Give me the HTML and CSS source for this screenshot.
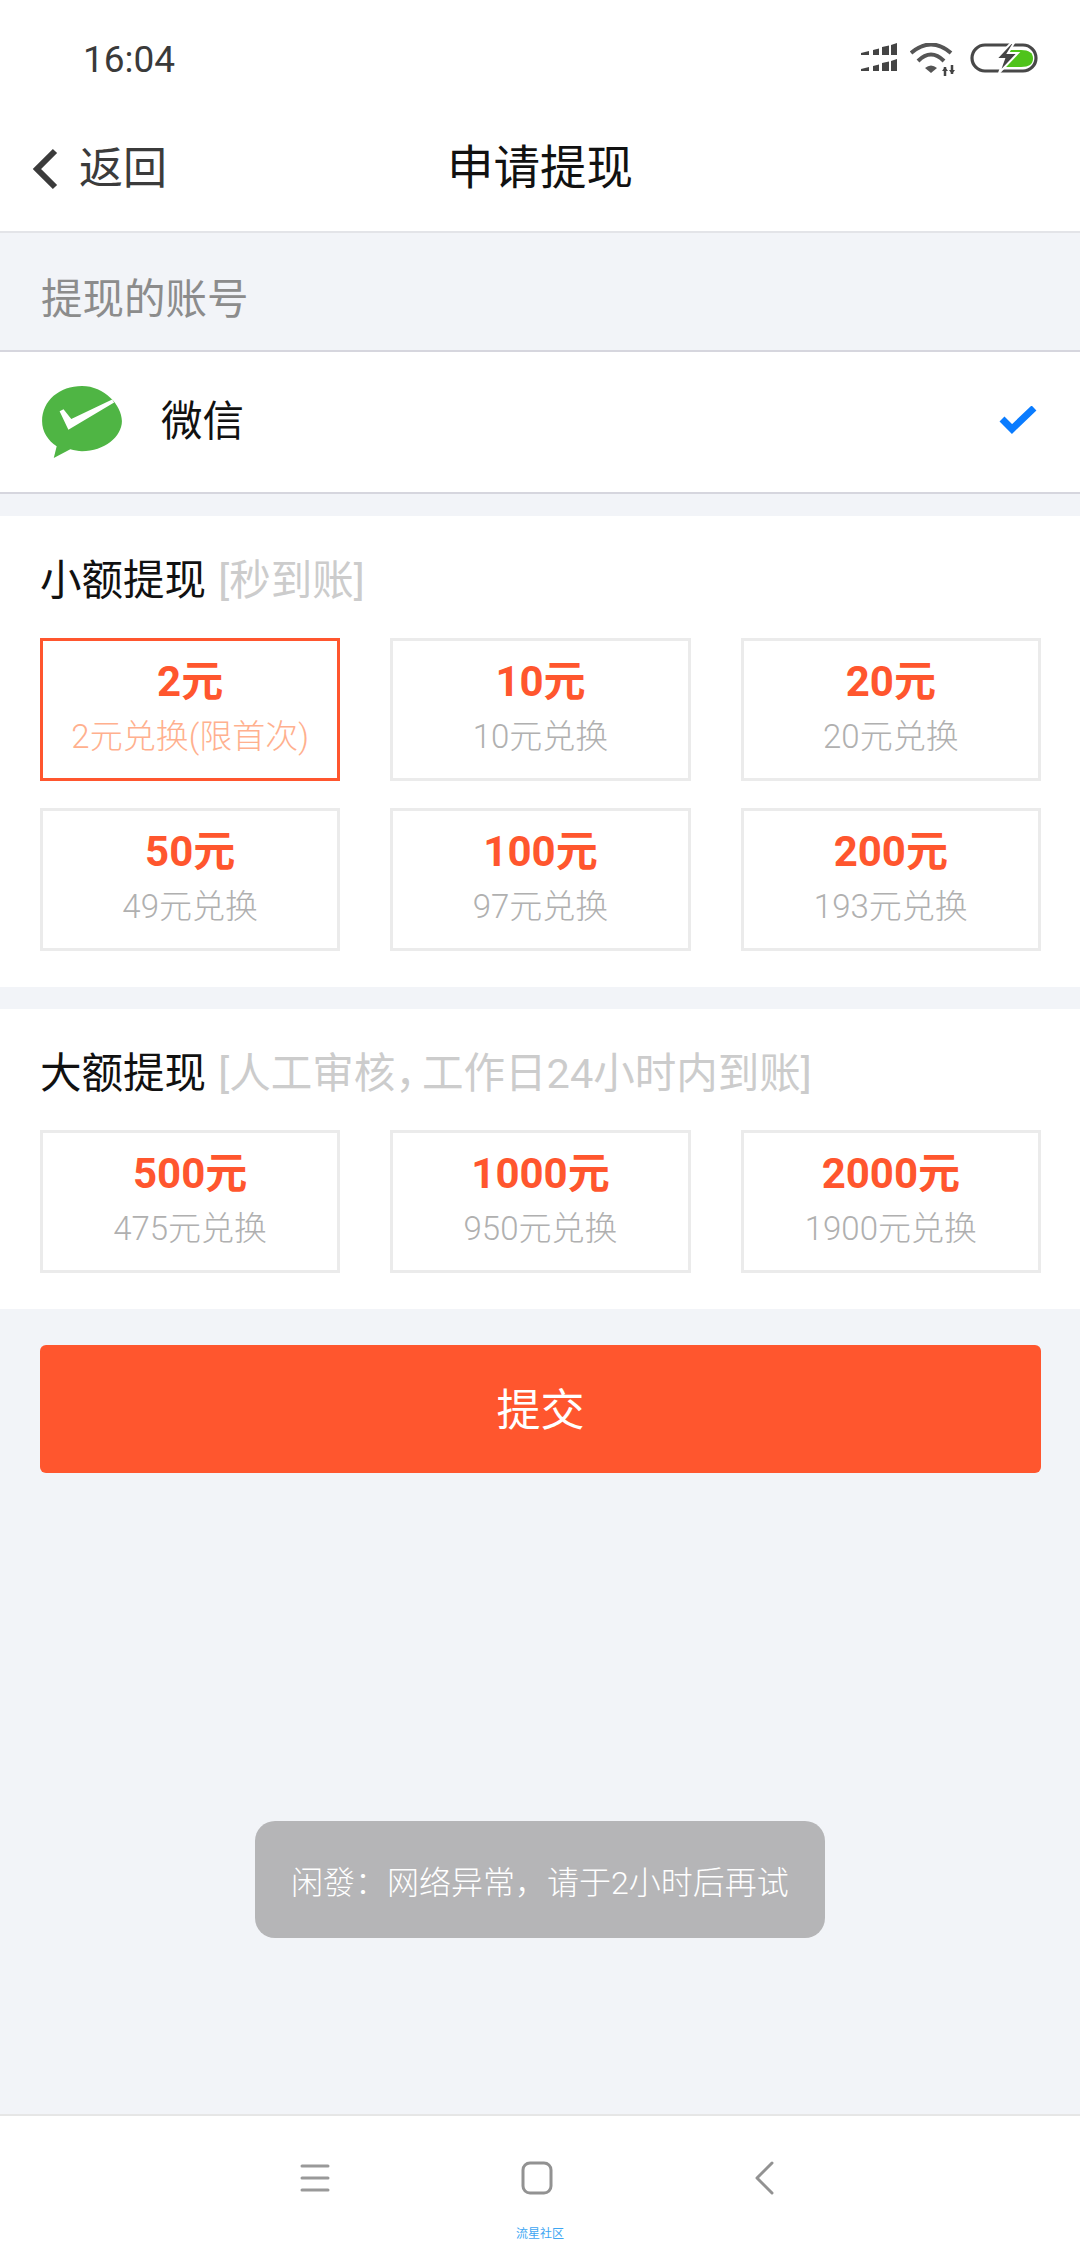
FILE: index.html
```html
<!DOCTYPE html>
<html lang="zh-CN">
<head>
<meta charset="utf-8">
<title>申请提现</title>
<link rel="stylesheet" href="styles.css">
</head>
<body>
<div class="app">
  <header class="top">
    <div class="status">
      <span class="time">16:04</span>
      <div class="status-icons">
        <svg width="36" height="28" viewBox="0 0 36 28"><g fill="#444"><path d="M0 10 8 8V12H0zM12 7 18 5.500V12H12zM21 4 28 2.500V12H21zM30 2 36 0V12H30z"/><path d="M0 26 8 24V28H0zM12 23 18 21.500V28H12zM21 20 28 18.500V28H21zM30 18 36 16V28H30z"/></g></svg>
        <svg width="47" height="33" viewBox="0 0 47 33"><g fill="none" stroke="#555" stroke-width="4"><path d="M1 10Q21-7 41 10"/><path d="M8 18Q21 5 34 18"/></g><path d="M15 25Q21 20 27 25L21 30z" fill="#555"/><path d="M35 24V33M42 22V31" stroke="#444" stroke-width="2.500"/><path d="M32 28H38L35 24zM39 27H45L42 31z" fill="#444"/></svg>
        <svg width="68" height="30" viewBox="0 0 68 30"><rect x="2" y="2" width="64" height="26" rx="13" fill="none" stroke="#484848" stroke-width="3.200"/><path d="M38 7H51Q63 7 63 15.500T51 24H32z" fill="#4fc31a"/><path d="M41 0 26 16H34L29 30 48 10H38L44 0z" fill="#444" stroke="#fff" stroke-width="2"/></svg>
      </div>
    </div>
    <nav class="nav">
      <div class="back">
        <svg width="28" height="44" viewBox="0 0 28 44"><path d="M25 4 7 22 25 40" fill="none" stroke="#3b3b3b" stroke-width="6"/></svg>
        <span>返回</span>
      </div>
      <h1 class="title">申请提现</h1>
    </nav>
  </header>

  <div class="section-label">提现的账号</div>
  <div class="account">
    <svg class="wechat" width="82" height="74" viewBox="0 0 84 76"><path d="M42 1C19 1 1 16 1 37c0 11 6 20 15 26l-3 12 17-9c4 1 8 2 12 2 23 0 41-15 41-31S65 1 42 1z" fill="#4fb544"/><path d="M19 27 28 46 75 18 73 15 31 35 23 25z" fill="#fff"/></svg>
    <span class="account-name">微信</span>
    <svg class="tick" width="38" height="30" viewBox="0 0 38 30"><path d="M3 13 13 23 35 2" fill="none" stroke="#0a7cff" stroke-width="7"/></svg>
  </div>

  <section class="card">
    <h2 class="card-title">小额提现 <em>[秒到账]</em></h2>
    <div class="grid">
      <div class="opt active"><b>2元</b><span>2元兑换(限首次)</span></div>
      <div class="opt"><b>10元</b><span>10元兑换</span></div>
      <div class="opt"><b>20元</b><span>20元兑换</span></div>
      <div class="opt"><b>50元</b><span>49元兑换</span></div>
      <div class="opt"><b>100元</b><span>97元兑换</span></div>
      <div class="opt"><b>200元</b><span>193元兑换</span></div>
    </div>
  </section>

  <section class="card">
    <h2 class="card-title">大额提现 <em>[人工审核<i class="comma">，</i>工作日24小时内到账]</em></h2>
    <div class="grid">
      <div class="opt"><b>500元</b><span>475元兑换</span></div>
      <div class="opt"><b>1000元</b><span>950元兑换</span></div>
      <div class="opt"><b>2000元</b><span>1900元兑换</span></div>
    </div>
  </section>

  <div class="submit-wrap"><button class="submit">提交</button></div>

  <div class="toast">闲發：网络异常，请于2小时后再试</div>

  <footer class="bottom">
    <div class="softkeys">
      <svg width="30" height="30" viewBox="0 0 30 30"><path d="M2 3H28M2 15H28M2 27H28" stroke="#999" stroke-width="3" stroke-linecap="round"/></svg>
      <svg class="home" width="32" height="34" viewBox="0 0 32 34"><rect x="2" y="2" width="28" height="30" rx="7" fill="none" stroke="#929292" stroke-width="3"/></svg>
      <svg width="20" height="34" viewBox="0 0 20 34"><path d="M17 2 2 17 17 32" fill="none" stroke="#929292" stroke-width="3" stroke-linecap="round" stroke-linejoin="round"/></svg>
    </div>
    <div class="mark">流星社区</div>
  </footer>
</div>
</body>
</html>
```
FILE: styles.css
```css
* { box-sizing: border-box; }
html, body { margin: 0; padding: 0; }
body { font-family: Roboto, "Noto Sans CJK SC", sans-serif; background: #f2f4f8; }
.app { position: relative; width: 1080px; height: 2244px; display: flex; flex-direction: column; overflow: hidden; background: #f2f4f8; }

.top { height: 233px; background: #fff; border-bottom: 2px solid #e3e4e8; flex: none; }
.status { height: 143px; padding: 40px 42px 0 83px; display: flex; justify-content: space-between; align-items: flex-start; }
.time { font-size: 37px; line-height: 40px; color: #3a3a3a; }
.status-icons { display: flex; align-items: flex-start; gap: 13px; height: 40px; padding-top: 3px; }
.nav { position: relative; height: 88px; display: flex; align-items: flex-start; justify-content: center; }
.back { position: absolute; left: 30px; top: 3px; display: flex; align-items: center; gap: 21px; font-size: 44px; line-height: 46px; color: #3b3b3b; }
.title { margin: 0; font-size: 46.5px; line-height: 50px; font-weight: 400; color: #111; }

.section-label { height: 117px; padding: 8px 41px 0; display: flex; align-items: center; font-size: 41.5px; color: #8c8c8c; flex: none; }
.account { height: 144px; background: #fff; border-top: 2px solid #d6d6de; border-bottom: 2px solid #d6d6de; display: flex; align-items: center; padding: 0 43px 0 41px; flex: none; }
.wechat { flex: none; }
.account-name { margin: 0 0 8px 38px; font-size: 41.5px; color: #111; flex: 1; }
.tick { margin-bottom: 3px; }

.card { margin-top: 22px; background: #fff; padding: 0 39px 36px 40px; flex: none; }
.card-title { margin: 0; height: 122px; display: flex; align-items: center; gap: 2px; font-size: 41.5px; font-weight: 400; color: #111; white-space: pre; }
.card + .card .card-title { height: 121px; }
.card-title em { font-style: normal; color: #ccc; }
.comma { font-style: normal; font-feature-settings: "halt"; margin-right: 6px; }
.grid { display: grid; grid-template-columns: repeat(3, 1fr); gap: 27px 50px; }
.opt { height: 143px; padding-top: 2px; border: 3px solid #ebebeb; display: flex; flex-direction: column; align-items: center; justify-content: center; }
.opt b { font-size: 42px; line-height: 46px; font-weight: 700; color: #ff562e; }
.opt span { margin-top: 7px; font-size: 33px; line-height: 50px; font-weight: 300; color: #b0b0b0; }
.opt.active { border-color: #ff562e; }
.opt.active span { color: #ffb08e; }

.submit-wrap { padding: 36px 39px 0 40px; flex: none; }
.submit { display: block; width: 100%; height: 128px; padding: 0 0 4px; border: 0; border-radius: 6px; background: #ff562e; color: #fff; font: 400 44px "Noto Sans CJK SC", sans-serif; }

.toast { position: absolute; left: 255px; top: 1821px; width: 570px; height: 117px; border-radius: 20px; background: #b5b5b7; color: #fff; font-size: 32px; font-weight: 300; display: flex; align-items: center; justify-content: center; }

.bottom { margin-top: auto; height: 130px; background: #fff; border-top: 2px solid #e6e6e6; position: relative; flex: none; }
.softkeys { position: absolute; top: 45px; left: 300px; width: 475px; display: flex; justify-content: space-between; align-items: center; }
.home { margin-right: 12px; }
.mark { position: absolute; left: 0; right: 0; top: 110px; text-align: center; font-size: 12px; line-height: 16px; color: #3ea6f2; }
```
